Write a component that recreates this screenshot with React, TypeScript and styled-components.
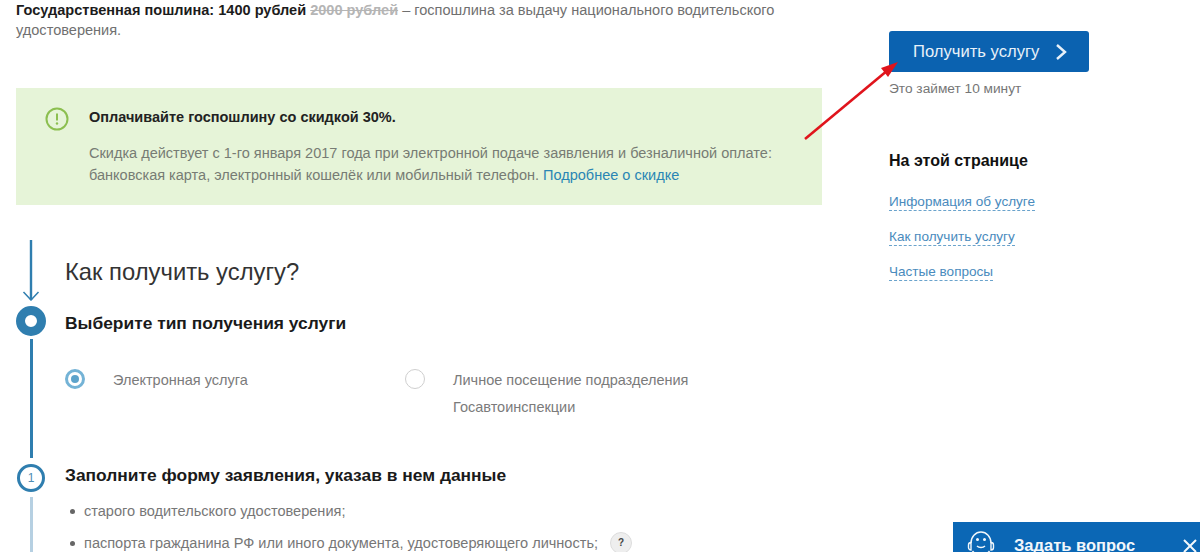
import React from "react";
import styled, { createGlobalStyle } from "styled-components";

const Global = createGlobalStyle`
  html, body { margin: 0; padding: 0; background: #fff; }
  body { font-family: "Liberation Sans", Arial, sans-serif; color: #1a1a1a; }
`;

const Page = styled.div`
  position: relative;
  width: 1200px;
  height: 552px;
  overflow: hidden;
  display: grid;
  grid-template-columns: 806px 200px;
  column-gap: 67px;
  padding-left: 16px;
  box-sizing: border-box;
`;

const Main = styled.main`
  display: flex;
  flex-direction: column;
  min-width: 0;
`;

const Fee = styled.p`
  margin: 0;
  width: 790px;
  height: 88px;
  font-size: 14.56px;
  line-height: 20px;
  color: #707070;
  strong { color: #1c1c1c; font-weight: 700; }
  s { color: #b5b5b5; font-weight: 700; }
`;

const Notice = styled.section`
  height: 117px;
  box-sizing: border-box;
  background: #e6f4d8;
  padding: 19px 30px 0 29px;
  display: flex;
  gap: 20px;
`;

const NoticeIcon = styled.svg`
  width: 24px;
  height: 24px;
  flex: none;
`;

const NoticeBody = styled.div`
  display: flex;
  flex-direction: column;
  gap: 16px;
  padding-top: 1px;
`;

const NoticeTitle = styled.div`
  font-size: 14.5px;
  line-height: 18px;
  font-weight: 700;
  color: #222;
`;

const NoticeText = styled.p`
  margin: 0;
  font-size: 14.52px;
  line-height: 22px;
  color: #777c74;
  white-space: nowrap;
`;

const InlineLink = styled.a`
  color: #2a86b4;
`;

const Steps = styled.div`
  margin-top: 35px;
  display: flex;
  flex-direction: column;
`;

const Step = styled.div<{ $h: number }>`
  display: flex;
  height: ${(p) => p.$h}px;
  gap: 19px;
`;

const Rail = styled.div`
  width: 30px;
  flex: none;
  display: flex;
  flex-direction: column;
  align-items: center;
`;

const RailLine = styled.div<{ $light?: boolean }>`
  width: 3px;
  flex: 1;
  margin-top: ${(p) => (p.$light ? 5 : 3)}px;
  margin-bottom: ${(p) => (p.$light ? 0 : 6)}px;
  background: ${(p) => (p.$light ? "#b6d0e2" : "#2f7eaf")};
`;

const Ring = styled.div`
  width: 30px;
  height: 30px;
  box-sizing: border-box;
  flex: none;
  border: 9px solid #2f7eaf;
  border-radius: 50%;
`;

const NumberBadge = styled.div`
  width: 28px;
  height: 28px;
  box-sizing: border-box;
  flex: none;
  border: 3px solid #2f7eaf;
  border-radius: 50%;
  display: flex;
  align-items: center;
  justify-content: center;
  font-size: 12px;
  color: #4d8bb3;
`;

const Content = styled.div`
  flex: 1;
  min-width: 0;
`;

const Heading = styled.h2`
  margin: 18px 0 0;
  font-weight: 400;
  font-size: 23.8px;
  line-height: 28px;
  color: #333;
`;

const StepTitle = styled.h3<{ $top: number }>`
  margin: ${(p) => p.$top}px 0 0;
  font-size: 17.4px;
  line-height: 20px;
  font-weight: 700;
  color: #1a1a1a;
`;

const Options = styled.div`
  margin-top: 34px;
  display: grid;
  grid-template-columns: 340px 300px;
`;

const Option = styled.label`
  display: flex;
  gap: 28px;
  font-size: 14.5px;
  line-height: 27px;
  color: #7b7b7b;
`;

const Radio = styled.span<{ $on?: boolean }>`
  width: 20px;
  height: 20px;
  flex: none;
  box-sizing: border-box;
  margin-top: 2px;
  border-radius: 50%;
  border: ${(p) => (p.$on ? "3px solid #74b3d6" : "1px solid #cfcfcf")};
  display: flex;
  align-items: center;
  justify-content: center;
  &::after {
    content: "";
    display: ${(p) => (p.$on ? "block" : "none")};
    width: 8px;
    height: 8px;
    border-radius: 50%;
    background: #5da3cb;
  }
`;

const Bullets = styled.ul`
  list-style: none;
  margin: 16px 0 0;
  padding: 0;
  display: flex;
  flex-direction: column;
  gap: 11px;
`;

const Bullet = styled.li`
  display: flex;
  align-items: center;
  font-size: 14.55px;
  line-height: 20px;
  color: #777;
  padding-left: 5px;
  &::before {
    content: "";
    width: 5px;
    height: 5px;
    border-radius: 50%;
    background: #666;
    margin-right: 9px;
  }
`;

const Hint = styled.span`
  width: 22px;
  height: 22px;
  margin-left: 12px;
  border-radius: 50%;
  background: #eee;
  border: 1px solid #ddd;
  box-sizing: border-box;
  display: flex;
  align-items: center;
  justify-content: center;
  font-size: 10px;
  font-weight: 700;
  color: #444;
`;

const Side = styled.aside`
  display: flex;
  flex-direction: column;
  padding-top: 31px;
`;

const CTA = styled.button`
  width: 200px;
  height: 41px;
  border: 0;
  border-radius: 3px;
  background: #0b62b0;
  color: #e8f1f9;
  font: 400 16.6px "Liberation Sans", Arial, sans-serif;
  display: flex;
  align-items: center;
  padding: 0 0 0 24px;
  gap: 16px;
`;

const Duration = styled.div`
  margin-top: 9px;
  font-size: 13.7px;
  line-height: 16px;
  color: #767676;
`;

const SideTitle = styled.h4`
  margin: 54px 0 0;
  font-size: 16px;
  line-height: 20px;
  font-weight: 700;
  color: #111;
`;

const SideNav = styled.nav`
  margin-top: 23px;
  display: flex;
  flex-direction: column;
  align-items: flex-start;
  gap: 18px;
`;

const SideLink = styled.a`
  font-size: 13.55px;
  line-height: 16px;
  color: #4a8bbd;
  border-bottom: 1px dashed #6aa3cc;
`;

const Arrow = styled.svg`
  position: absolute;
  left: 800px;
  top: 55px;
  width: 105px;
  height: 90px;
  pointer-events: none;
`;

const Chat = styled.div`
  position: absolute;
  right: 0;
  bottom: 0;
  width: 247px;
  height: 30px;
  background: #0b67b5;
  color: #f2f7fb;
  overflow: hidden;
  display: flex;
  align-items: flex-start;
  box-sizing: border-box;
  padding: 8px 0 0 14px;
`;

const ChatLabel = styled.span`
  font-size: 16.5px;
  font-weight: 700;
  line-height: 20px;
  margin-left: 17px;
  margin-top: 5px;
  white-space: nowrap;
`;

const ChatClose = styled.svg`
  width: 14px;
  height: 14px;
  margin-left: 48px;
  margin-top: 9px;
  flex: none;
`;

export default function App() {
  return (
    <>
      <Global />
      <Page>
        <Main>
          <Fee>
            <strong>Государственная пошлина: 1400 рублей</strong> <s>2000 рублей</s> – госпошлина за выдачу национального водительского удостоверения.
          </Fee>
          <Notice>
            <NoticeIcon viewBox="0 0 24 24" fill="none">
              <circle cx="12" cy="12" r="10.5" stroke="#8cbf50" strokeWidth="2" />
              <path d="M12 6.5v7" stroke="#8cbf50" strokeWidth="2" />
              <circle cx="12" cy="16.5" r="1.2" fill="#8cbf50" />
            </NoticeIcon>
            <NoticeBody>
              <NoticeTitle>Оплачивайте госпошлину со скидкой 30%.</NoticeTitle>
              <NoticeText>
                Скидка действует с 1-го января 2017 года при электронной подаче заявления и безналичной оплате:
                <br />
                банковская карта, электронный кошелёк или мобильный телефон. <InlineLink>Подробнее о скидке</InlineLink>
              </NoticeText>
            </NoticeBody>
          </Notice>
          <Steps>
            <Step $h={66}>
              <Rail>
                <svg width="18" height="61" viewBox="0 0 18 61" fill="none">
                  <path d="M9 0v60" stroke="#2f7eaf" strokeWidth="2.4" />
                  <path d="M1.5 52L9 60l7.5-8" stroke="#2f7eaf" strokeWidth="1.5" />
                </svg>
              </Rail>
              <Content>
                <Heading>Как получить услугу?</Heading>
              </Content>
            </Step>
            <Step $h={158}>
              <Rail>
                <Ring />
                <RailLine />
              </Rail>
              <Content>
                <StepTitle $top={7}>Выберите тип получения услуги</StepTitle>
                <Options>
                  <Option>
                    <Radio $on />
                    <span>Электронная услуга</span>
                  </Option>
                  <Option>
                    <Radio />
                    <span>
                      Личное посещение подразделения
                      <br />
                      Госавтоинспекции
                    </span>
                  </Option>
                </Options>
              </Content>
            </Step>
            <Step $h={120}>
              <Rail>
                <NumberBadge>1</NumberBadge>
                <RailLine $light />
              </Rail>
              <Content>
                <StepTitle $top={1}>Заполните форму заявления, указав в нем данные</StepTitle>
                <Bullets>
                  <Bullet>старого водительского удостоверения;</Bullet>
                  <Bullet>
                    паспорта гражданина РФ или иного документа, удостоверяющего личность;
                    <Hint>?</Hint>
                  </Bullet>
                </Bullets>
              </Content>
            </Step>
          </Steps>
        </Main>
        <Side>
          <CTA>
            Получить услугу
            <svg width="12" height="18" viewBox="0 0 12 18" fill="none">
              <path d="M2 2l8 7-8 7" stroke="#e8f1f9" strokeWidth="2.4" />
            </svg>
          </CTA>
          <Duration>Это займет 10 минут</Duration>
          <SideTitle>На этой странице</SideTitle>
          <SideNav>
            <SideLink>Информация об услуге</SideLink>
            <SideLink>Как получить услугу</SideLink>
            <SideLink>Частые вопросы</SideLink>
          </SideNav>
        </Side>
        <Arrow viewBox="0 0 105 90" fill="none">
          <path d="M5 84L88 15" stroke="#e0141c" strokeWidth="2.6" />
          <path d="M98 7L81 13l7 9z" fill="#e0141c" />
        </Arrow>
        <Chat>
          <svg width="30" height="30" viewBox="0 0 30 30" fill="none" stroke="#f2f7fb" strokeWidth="1.4">
            <path d="M4 13a10 11 0 0 1 20 0" />
            <path d="M5.5 21c2 2.5 5 4 8.5 4s6.500-1.500 8.500-4" />
            <path d="M1.500 15c0-1.500 1-2.500 2.500-2.500V20c-1.500 0-2.500-1-2.500-2.500zM26.500 15c0-1.500-1-2.500-2.500-2.500V20c1.500 0 2.500-1 2.500-2.500z" />
            <circle cx="10.500" cy="9.500" r="0.800" fill="#f2f7fb" />
            <circle cx="17.500" cy="9.500" r="0.800" fill="#f2f7fb" />
            <path d="M10 16c2 2 6 2 8 0" />
          </svg>
          <ChatLabel>Задать вопрос</ChatLabel>
          <ChatClose viewBox="0 0 14 14" fill="none">
            <path d="M1 1l12 12M13 1L1 13" stroke="#f2f7fb" strokeWidth="2" />
          </ChatClose>
        </Chat>
      </Page>
    </>
  );
}
